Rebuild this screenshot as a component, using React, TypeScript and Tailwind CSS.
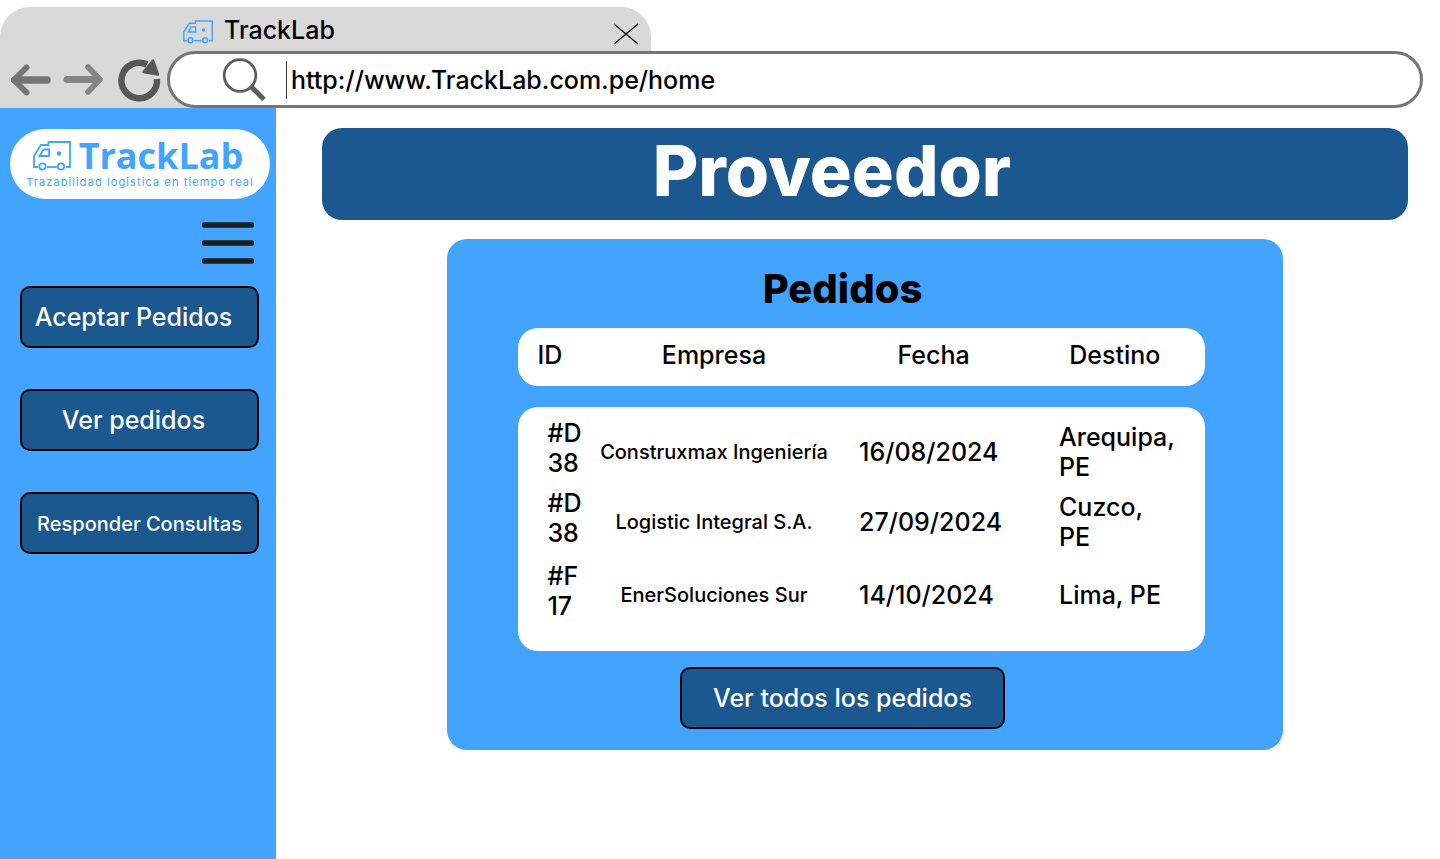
import React from "react";

type Order = { id: string; company: string; date: string; destination: string };

const orders: Order[] = [
  { id: "#D\n38", company: "Construxmax Ingeniería", date: "16/08/2024", destination: "Arequipa,\nPE" },
  { id: "#D\n38", company: "Logistic Integral S.A.", date: "27/09/2024", destination: "Cuzco,\nPE" },
  { id: "#F\n17", company: "EnerSoluciones Sur", date: "14/10/2024", destination: "Lima, PE" },
];

const rowHeights = ["h-20", "h-[70px]", "h-[94px]"];

function Truck({ className }: { className: string }) {
  return (
    <svg viewBox="0 0 38 30" className={className} fill="none" stroke="#42a4ff" strokeWidth="1.800" aria-hidden="true">
      <path d="M5 26H1V15L8 4H15.500V1H37V26H33" />
      <path d="M24 26H14" />
      <path d="M6.500 15L10.500 8.500H16V15Z" />
      <circle cx="9.500" cy="25.500" r="3.200" />
      <circle cx="28" cy="25.500" r="3.200" />
      <circle cx="26" cy="12.500" r="2.200" fill="#42a4ff" stroke="none" />
    </svg>
  );
}

function BrowserChrome() {
  return (
    <header className="pt-[7px]">
      <div className="flex h-11 w-[45.2%] items-center rounded-t-[30px] bg-[#d9d9d9] pt-[2px] pr-3 pl-[183px]">
        <Truck className="mt-1 h-6 w-[30px]" />
        <span className="ml-[11px] flex-1 text-[25px] leading-[30px]">TrackLab</span>
        <button type="button" aria-label="Cerrar pestaña" className="mt-2">
          <svg viewBox="0 0 26 22" className="h-[22px] w-[26px]" stroke="#000" strokeWidth="1.200">
            <path d="M1 1L25 21M25 1L1 21" />
          </svg>
        </button>
      </div>
      <div className="flex h-[57px] items-center bg-[linear-gradient(to_right,#d9d9d9_45.2%,white_45.2%)] pr-[17px]">
        <div className="flex w-[167px] shrink-0 items-center gap-3 pl-[11px]">
          <button type="button" aria-label="Atrás">
            <svg viewBox="0 0 40 32" className="h-8 w-10" fill="none" stroke="#757575" strokeLinecap="round" strokeLinejoin="round">
              <path d="M4 16H36" strokeWidth="7.500" />
              <path d="M15.500 3.500L3 16L15.500 28.500" strokeWidth="6" />
            </svg>
          </button>
          <button type="button" aria-label="Adelante">
            <svg viewBox="0 0 40 32" className="h-8 w-10" fill="none" stroke="#858585" strokeLinecap="round" strokeLinejoin="round">
              <path d="M4 15.500H35" strokeWidth="7" />
              <path d="M25 3L37 15.500L25 28" strokeWidth="5.500" />
            </svg>
          </button>
          <button type="button" aria-label="Recargar">
            <svg viewBox="0 0 48 46" className="h-[46px] w-12" fill="none">
              <path d="M32 7.500A17.800 17.800 0 1 0 42 22" stroke="#575756" strokeWidth="6.500" />
              <path d="M38 3.500L43 17.500L28.500 15Z" fill="#575756" stroke="#575756" strokeWidth="2.500" strokeLinejoin="round" />
            </svg>
          </button>
        </div>
        <div className="flex h-full flex-1 items-center rounded-full border-[3px] border-[#757575] bg-white pl-[52px]">
          <svg viewBox="0 0 44 44" className="h-11 w-11 shrink-0" fill="none" stroke="#5e5e5e" aria-hidden="true">
            <circle cx="18" cy="17.500" r="15.800" strokeWidth="2.800" />
            <path d="M28.500 28L42 41.500" strokeWidth="5" />
          </svg>
          <span className="ml-5 h-[38px] w-px shrink-0 bg-[#333]" />
          <input
            type="text"
            aria-label="Dirección"
            defaultValue="http://www.TrackLab.com.pe/home"
            className="ml-1 min-w-0 flex-1 bg-transparent pr-6 text-[25px] leading-[30px] outline-none"
          />
        </div>
      </div>
    </header>
  );
}

const navButton =
  "flex h-[62px] w-full items-center justify-center rounded-[10px] border-2 border-black bg-[#1b588f] pt-[2px] whitespace-nowrap text-white";

function Sidebar() {
  return (
    <aside className="flex w-[276px] shrink-0 flex-col bg-[#42a4ff] pt-[21px]">
      <a href="#inicio" className="mr-[6px] ml-[10px] flex h-[70px] flex-col items-center rounded-[35px] bg-white pt-2 text-[#42a4ff]">
        <span className="flex items-start gap-2 pr-1">
          <Truck className="mt-1 h-[30px] w-[38px]" />
          <span className="font-['Open_Sans',sans-serif] text-[36px] leading-[38px] font-bold">TrackLab</span>
        </span>
        <span className="text-[11px] leading-[14px] font-normal tracking-widest whitespace-nowrap">Trazabilidad logistica en tiempo real</span>
      </a>
      <button type="button" aria-label="Menú" className="mt-[23px] mr-[22px] self-end">
        <svg viewBox="0 0 52 42" className="h-[42px] w-[52px]" stroke="#1e1e1e" strokeWidth="5.500" strokeLinecap="round">
          <path d="M2.500 3H49.500M2.500 21H49.500M2.500 39H49.500" />
        </svg>
      </button>
      <nav className="mt-[22px] flex flex-col gap-[41px] pr-[17px] pl-5">
        <button type="button" className={`${navButton} pr-3 text-[25px]`}>Aceptar Pedidos</button>
        <button type="button" className={`${navButton} pr-3 text-[25px]`}>Ver pedidos</button>
        <button type="button" className={`${navButton} text-[20px]`}>Responder Consultas</button>
      </nav>
    </aside>
  );
}

function OrdersTable() {
  return (
    <table className="w-full table-fixed border-separate border-spacing-0 text-[25px] leading-[30px]">
      <colgroup>
        <col className="w-[11%]" />
        <col className="w-[35%]" />
        <col className="w-[29%]" />
        <col className="w-[25%]" />
      </colgroup>
      <thead>
        <tr className="h-[58px] *:bg-white *:p-0 *:pb-1 *:font-medium">
          <th scope="col" className="rounded-l-[20px] text-left"><span className="pl-[19px]">ID</span></th>
          <th scope="col">Empresa</th>
          <th scope="col">Fecha</th>
          <th scope="col" className="rounded-r-[20px]"><span className="pr-2">Destino</span></th>
        </tr>
      </thead>
      <tbody className="before:block before:h-[21px] before:content-['']">
        {orders.map((order, i) => {
          const first = i === 0;
          const last = i === orders.length - 1;
          const pad = first ? "pt-[10px]" : last ? "pb-[18px]" : "";
          return (
            <tr key={i} className={`${rowHeights[i]} *:bg-white *:align-middle`}>
              <td className={`${pad} pl-[29px] ${first ? "rounded-tl-[20px]" : ""} ${last ? "rounded-bl-[20px]" : ""}`}>
                <div className="pb-2 whitespace-pre-line">{order.id}</div>
              </td>
              <td className={`${pad} text-center text-[20px] whitespace-nowrap`}>{order.company}</td>
              <td className={`${pad} pl-[25px]`}>{order.date}</td>
              <td className={`${pad} pl-[26px] ${first ? "rounded-tr-[20px]" : ""} ${last ? "rounded-br-[20px]" : ""}`}>
                <div className="whitespace-pre-line">{order.destination}</div>
              </td>
            </tr>
          );
        })}
      </tbody>
    </table>
  );
}

export default function App() {
  return (
    <div className="flex min-h-screen flex-col bg-white font-['Inter',sans-serif] font-medium text-black">
      <BrowserChrome />
      <div className="flex flex-1">
        <Sidebar />
        <main className="min-w-0 flex-1 pt-5 pr-8 pb-8 pl-[46px]">
          <h1 className="flex h-[92px] items-center justify-center rounded-[20px] bg-[#1b588f] pr-[66px] pb-[6px] text-[70px] leading-[84px] font-extrabold text-white">
            Proveedor
          </h1>
          <section className="mx-auto mt-[19px] flex w-[76.9%] flex-col items-center rounded-[20px] bg-[#42a4ff] pt-[26px] pr-[78px] pb-[21px] pl-[71px]">
            <h2 className="mb-[15px] pr-[38px] text-[40px] leading-[48px] font-extrabold">Pedidos</h2>
            <OrdersTable />
            <div className="mt-4 pr-[38px]">
              <button type="button" className="h-[62px] rounded-[10px] border-2 border-black bg-[#1b588f] px-[31px] pt-[2px] text-[25px] whitespace-nowrap text-white">
                Ver todos los pedidos
              </button>
            </div>
          </section>
        </main>
      </div>
    </div>
  );
}
